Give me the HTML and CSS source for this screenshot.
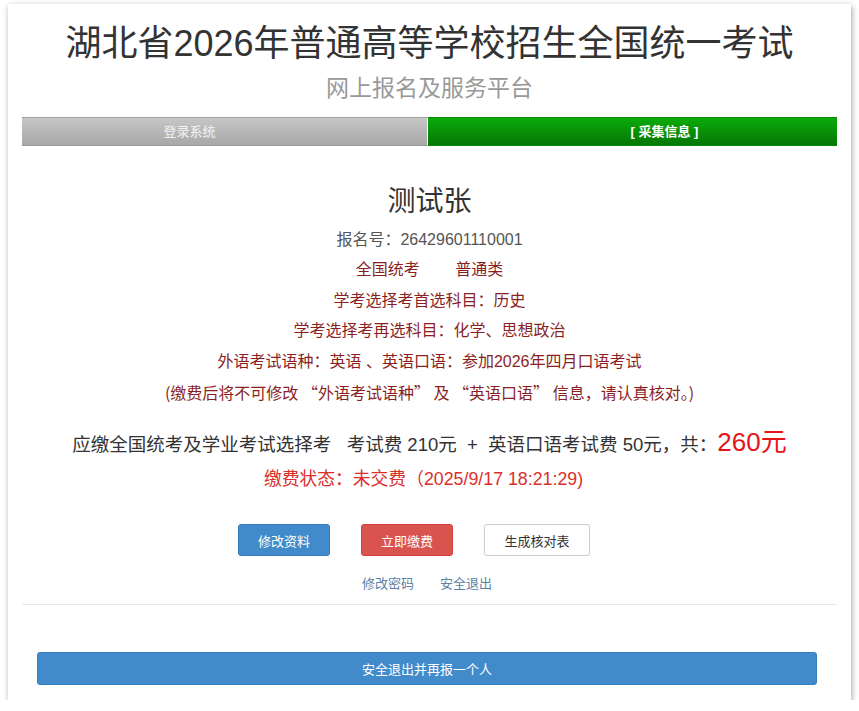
FILE: index.html
```html
<!DOCTYPE html>
<html lang="zh-CN">
<head>
    <meta charset="UTF-8">
    <title>网上报名及服务平台</title>
    <link rel="stylesheet" href="styles.css">
</head>
<body>
    <div class="page">
        <h1 class="title">湖北省2026年普通高等学校招生全国统一考试</h1>
        <div class="subtitle">网上报名及服务平台</div>

        <div class="steps">
            <div class="step">登录系统</div>
            <div class="step active">[ 采集信息 ]</div>
        </div>

        <div class="info">
            <div class="name">测试张</div>
            <div class="line gray">报名号：26429601110001</div>
            <div class="line">全国统考&nbsp;&nbsp;&nbsp;&nbsp;&nbsp;&nbsp;&nbsp;&nbsp;普通类</div>
            <div class="line">学考选择考首选科目：历史</div>
            <div class="line">学考选择考再选科目：化学、思想政治</div>
            <div class="line">外语考试语种：英语 、英语口语：参加2026年四月口语考试</div>
            <div class="line notice">(缴费后将不可修改 “外语考试语种” 及 “英语口语” 信息，请认真核对。)</div>
        </div>

        <div class="fee">应缴全国统考及学业考试选择考&nbsp;&nbsp;&nbsp;考试费&nbsp;210元&nbsp;&nbsp;+&nbsp;&nbsp;英语口语考试费&nbsp;50元，共：<span class="total">260元</span></div>
        <div class="status">缴费状态：未交费（2025/9/17 18:21:29)</div>

        <div class="actions">
            <button class="btn btn-blue">修改资料</button>
            <button class="btn btn-red">立即缴费</button>
            <button class="btn btn-white">生成核对表</button>
        </div>

        <div class="links">
            <a href="#">修改密码</a>
            <a href="#">安全退出</a>
        </div>

        <hr class="divider">

        <div class="bottom">
            <button class="btn btn-blue btn-wide">安全退出并再报一个人</button>
        </div>
    </div>
</body>
</html>
```

FILE: styles.css
```css
body {
    margin: 0;
    background-color: #ffffff;
    font-family: "Liberation Sans", "Noto Sans CJK SC", sans-serif;
    color: #333333;
}
.page {
    margin: 4px 0 0 8px;
    width: 843px;
    height: 696px;
    box-sizing: border-box;
    padding: 17px 14px 0 14px;
    background-color: #ffffff;
    box-shadow: 1px 2px 6px rgba(0, 0, 0, 0.35);
    text-align: center;
}
.title {
    margin: 0;
    font-size: 36px;
    font-weight: normal;
    line-height: 46px;
    color: #333333;
}
.subtitle {
    margin-top: 6px;
    font-size: 23px;
    line-height: 30px;
    color: #999999;
}
.steps {
    display: flex;
    margin-top: 14px;
    height: 29px;
}
.step {
    width: 405px;
    line-height: 27px;
    font-size: 13px;
    color: #f4f4f4;
    background: linear-gradient(#c6c6c6, #a8a8a8);
    border-top: 1px solid #a0a0a0;
    border-bottom: 1px solid #9a9a9a;
    box-sizing: border-box;
    padding-right: 70px;
}
.step.active {
    width: auto;
    flex: 1;
    padding-right: 0;
    padding-left: 64px;
    font-weight: bold;
    color: #ffffff;
    background: linear-gradient(#0bab0b, #067606);
    border-color: #068a06;
    border-left: 1px solid #ffffff;
}
.info {
    margin-top: 36px;
}
.name {
    font-size: 28px;
    line-height: 40px;
    color: #333333;
    margin-bottom: 3px;
}
.line {
    font-size: 16px;
    line-height: 30.4px;
    color: #8a1f1f;
}
.line.gray {
    color: #555555;
}
.line.notice {
    font-family: "Noto Sans CJK SC", sans-serif;
}
.fee {
    margin-top: 17px;
    font-size: 18.5px;
    line-height: 36px;
    color: #333333;
}
.total {
    font-size: 26px;
    color: #e4141b;
}
.status {
    margin-top: 3px;
    padding-right: 12px;
    font-size: 17.8px;
    line-height: 26px;
    color: #d9302c;
}
.actions {
    display: flex;
    justify-content: center;
    gap: 31px;
    margin-top: 32px;
    padding-right: 31px;
}
.btn {
    height: 32px;
    padding: 0;
    font-family: inherit;
    font-size: 13px;
    border-radius: 3px;
    cursor: pointer;
}
.btn-blue {
    width: 92px;
    background-color: #428bca;
    border: 1px solid #357ebd;
    color: #ffffff;
}
.btn-red {
    width: 92px;
    background-color: #d9534f;
    border: 1px solid #d43f3a;
    color: #ffffff;
}
.btn-white {
    width: 106px;
    background-color: #ffffff;
    border: 1px solid #cccccc;
    color: #333333;
}
.links {
    display: flex;
    justify-content: center;
    gap: 26px;
    margin-top: 18px;
    padding-right: 5px;
    line-height: 20px;
}
.links a {
    font-size: 13px;
    color: #5b7fa6;
    text-decoration: none;
}
.divider {
    margin: 10px 0 0 0;
    border: none;
    border-top: 1px solid #e8e8e8;
}
.bottom {
    margin-top: 47px;
    padding: 0 20px 0 15px;
}
.btn-wide {
    width: 100%;
    height: 33px;
}
```
